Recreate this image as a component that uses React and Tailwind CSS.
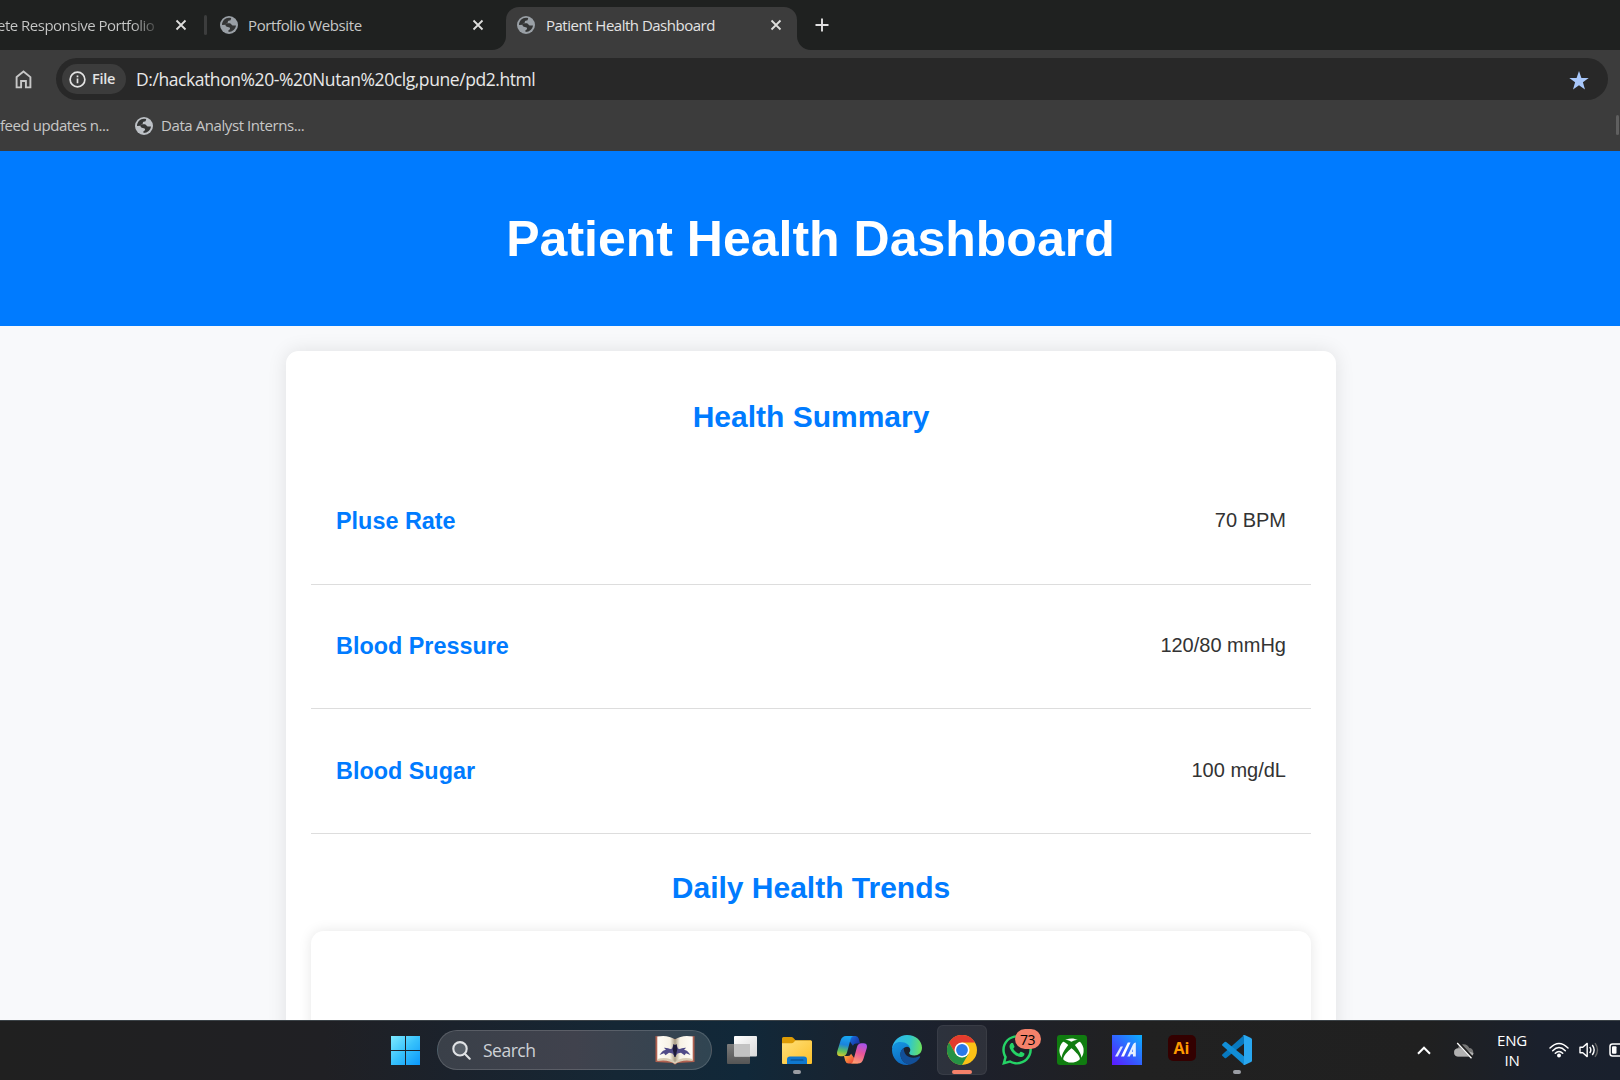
import React from "react";
import { FaWhatsapp, FaXbox } from "react-icons/fa";

function Globe({ className }) {
  return (
    <svg viewBox="0 0 18 18" className={className}>
      <circle cx="9" cy="9" r="9" fill="currentColor" />
      <g fill="#343535">
        <path d="M11.2 2.1L10.6 4.2L7.9 5L8 6.6L6 7.2L5.6 8.7L2 9C2 5 5.2 1.7 9.2 1.8Z" />
        <path d="M5.5 7.2H9.8C11.6 7.4 11.4 9.4 13 9.6H16C15.6 13.2 12.6 16 8.6 16.1L8.4 14.2C10 14 10.6 12.6 9.6 11.6C8.6 10.8 7.2 11.4 6 10.2C5.3 9.4 5.2 8.3 5.5 7.2Z" />
      </g>
    </svg>
  );
}

function Close() {
  return (
    <svg viewBox="0 0 12 12" className="size-3 shrink-0 text-[#dededc]">
      <path d="M1.5 1.5l9 9M10.5 1.5l-9 9" stroke="currentColor" strokeWidth="1.8" />
    </svg>
  );
}

function TabStrip() {
  return (
    <div className="flex h-[50px] w-full items-end bg-[#1f2120] text-[15px] text-[#c7c8c7]">
      <div className="flex h-[50px] w-[204px] items-center justify-between">
        <span className="-ml-[3px] w-[165px] bg-linear-to-r from-[#c7c8c7] from-82% to-transparent bg-clip-text tracking-[-0.5px] whitespace-nowrap text-transparent">
          ete Responsive Portfolio
        </span>
        <span className="mr-[17px]"><Close /></span>
      </div>
      <div className="flex h-[50px] w-[302px] items-center">
        <div className="h-5 w-[3px] rounded bg-[#3c3d3d]" />
        <Globe className="ml-[13px] size-[18px] text-[#9aa0a6]" />
        <span className="ml-[10px] flex-1 tracking-[-0.38px]">Portfolio Website</span>
        <span className="mr-[22px]"><Close /></span>
      </div>
      <div className="relative flex h-[43px] w-[291px] items-center rounded-t-[13px] bg-[#3c3c3c] pb-[7px] text-[#e3e3e3]">
        <svg viewBox="0 0 14 14" className="absolute bottom-0 -left-3.5 size-3.5"><path d="M14 0v14H0A14 14 0 0 0 14 0Z" fill="#3c3c3c" /></svg>
        <svg viewBox="0 0 14 14" className="absolute -right-3.5 bottom-0 size-3.5"><path d="M0 0v14H14A14 14 0 0 1 0 0Z" fill="#3c3c3c" /></svg>
        <Globe className="ml-[11px] size-[18px] text-[#9aa0a6]" />
        <span className="ml-[11px] flex-1 tracking-[-0.5px]">Patient Health Dashboard</span>
        <span className="mr-[15px]"><Close /></span>
      </div>
      <div className="flex h-[50px] items-center pl-[18px]">
        <svg viewBox="0 0 14 14" className="size-3.5"><path d="M7 .5v13M.5 7h13" stroke="#e0e0e0" strokeWidth="1.9" /></svg>
      </div>
    </div>
  );
}

function AddressBar() {
  return (
    <div className="flex h-[58px] items-center bg-[#3c3c3c] pr-3 pl-[15px]">
      <svg viewBox="0 0 17 19" className="h-[19px] w-[17px]" fill="none" stroke="#c7c7c7" strokeWidth="1.9">
        <path d="M1.6 7.1L8.5 1.5L15.4 7.1V17.4H10.9V11H6.1V17.4H1.6Z" />
      </svg>
      <div className="ml-6 flex h-[42px] flex-1 items-center rounded-full bg-[#282828] pl-1.5">
        <div className="flex h-[30px] w-16 items-center rounded-full bg-[#3c3c3c] pl-[7px]">
          <svg viewBox="0 0 18 18" className="size-[17px]" fill="none" stroke="#e3e3e3" strokeWidth="1.8">
            <circle cx="9" cy="9" r="7.8" />
            <path d="M9 8v5M9 4.8v1.9" />
          </svg>
          <span className="mb-px ml-[6px] text-[14.5px] font-semibold tracking-[-0.3px] text-[#e3e3e3]">File</span>
        </div>
        <span className="ml-[10px] flex-1 text-[17.5px] tracking-[-0.43px] text-[#e8e8e8]">D:/hackathon%20-%20Nutan%20clg,pune/pd2.html</span>
        <svg viewBox="0 0 20 19" className="mt-0.5 mr-[19px] h-[19px] w-5"><path d="M10 0L12.4 6.9H19.7L13.9 11.3L16 18.5L10 14.2L4 18.5L6.1 11.3L.3 6.9H7.6Z" fill="#a8c7fa" /></svg>
      </div>
    </div>
  );
}

function Bookmarks() {
  return (
    <div className="flex h-[43px] items-center bg-[#3c3c3c] pb-[9px] text-[15px] text-[#c7c7c7]">
      <span className="w-[135px] tracking-[-0.45px] whitespace-nowrap">feed updates n...</span>
      <Globe className="mt-px size-[18px] text-[#bdc1c6]" />
      <span className="ml-2 flex-1 tracking-[-0.42px]">Data Analyst Interns...</span>
      <div className="mr-px h-5 w-[3px] rounded bg-[#5f5f5f]" />
    </div>
  );
}

const metrics = [
  { name: "Pluse Rate", value: "70 BPM" },
  { name: "Blood Pressure", value: "120/80 mmHg" },
  { name: "Blood Sugar", value: "100 mg/dL" },
];

function Dashboard() {
  return (
    <div className="h-[869px] overflow-hidden bg-[#f8f9fb] font-['Liberation_Sans',Arial,sans-serif]">
      <header className="flex h-[175px] items-center justify-center bg-[#007bff] pl-px">
        <h1 className="text-[50px] leading-[58px] font-bold text-white">Patient Health Dashboard</h1>
      </header>
      <main className="mt-[25px] ml-[286px] h-[900px] w-[1050px] rounded-[12.5px] bg-white px-[25px] pt-[49px] shadow-[0_0_19px_rgba(0,0,0,0.1)]">
        <h2 className="text-center text-[30px] leading-[34px] font-bold text-[#007bff]">Health Summary</h2>
        <div className="mt-[26px]">
          {metrics.map((m) => (
            <div key={m.name} className="flex h-[124.7px] items-center justify-between border-b border-[#dddddd] px-[25px]">
              <h3 className="text-[23.4px] font-bold text-[#007bff]">{m.name}</h3>
              <span className="pb-[3px] text-[20px] text-[#333333]">{m.value}</span>
            </div>
          ))}
        </div>
        <h2 className="mt-[37px] text-center text-[30px] leading-[34px] font-bold text-[#007bff]">Daily Health Trends</h2>
        <div className="mt-[26px] h-[300px] rounded-[12.5px] bg-white shadow-[0_0_13px_rgba(0,0,0,0.1)]" />
      </main>
    </div>
  );
}

function Slot({ children, active, indicator }) {
  return (
    <div className="relative flex h-[60px] w-[55px] items-center justify-center">
      {active && <div className="absolute top-[5px] left-[2.5px] h-[50px] w-[50px] rounded-md border border-white/5 bg-white/8" />}
      <div className="relative">{children}</div>
      {active && <div className="absolute bottom-[6px] h-1 w-5 rounded-full bg-[#f4816a]" />}
      {indicator && <div className="absolute bottom-[6px] h-1 w-2 rounded-full bg-[#9a9da3]" />}
    </div>
  );
}

function WindowsLogo() {
  return (
    <svg viewBox="0 0 29 29" className="size-[29px]">
      <defs>
        <linearGradient id="win" x1="0" y1="0" x2="29" y2="29" gradientUnits="userSpaceOnUse">
          <stop offset="0" stopColor="#7eeaff" /><stop offset=".5" stopColor="#37c1fb" /><stop offset="1" stopColor="#0a97fb" />
        </linearGradient>
      </defs>
      <path d="M0 0h14v14H0zM15 0h14v14H15zM0 15h14v14H0zM15 15h14v14H15z" fill="url(#win)" />
    </svg>
  );
}

function BatBook() {
  return (
    <svg viewBox="0 0 40 30" className="h-[30px] w-10">
      <defs>
        <linearGradient id="page" x1="0" x2="1">
          <stop offset="0" stopColor="#fffdf7" /><stop offset=".36" stopColor="#f7f2e5" /><stop offset=".5" stopColor="#a89c83" /><stop offset=".64" stopColor="#f7f2e5" /><stop offset="1" stopColor="#fffdf7" />
        </linearGradient>
      </defs>
      <path d="M.5 1L20 4L39.5 1V27L22 28Q20 31 18 28L.5 27Z" fill="#b0604f" />
      <path d="M2.3 1.5Q13-.5 20 4.5Q27-.5 37.7 1.5V25Q27 23 20 28Q13 23 2.3 25Z" fill="url(#page)" />
      <path d="M2.3 24Q13 21 20 27Q27 21 37.7 24V26Q27 24 20 29Q13 24 2.3 26Z" fill="#d7ccb5" />
      <path d="M4.5 20C7 17 8 14.5 11 15L9 12.8C13 12.5 15 15 17.2 13.5L18.4 9.5L20 10.5L21.6 9.5L22.8 13.5C25 15 27 12.5 31 12.8L29 15C32 14.5 33 17 35.5 20L31 18.3L29.5 20.3L26 17.8L22.5 18.5L20 22L17.5 18.5L14 17.8L10.5 20.3L9 18.3Z" fill="#504b88" />
      <path d="M18.5 9L20 10L21.5 9L22.4 14L20.5 22H19.5L17.6 14Z" fill="#1d1b38" />
    </svg>
  );
}

function TaskView() {
  return (
    <svg viewBox="0 0 30 28" className="h-7 w-[30px]">
      <defs>
        <linearGradient id="tv" x1="0" y1="0" x2="1" y2="1"><stop stopColor="#ffffff" /><stop offset="1" stopColor="#d9d9d9" /></linearGradient>
        <linearGradient id="tvb" x1="0" y1="0" x2="0" y2="1"><stop stopColor="#7c7c7c" /><stop offset="1" stopColor="#555555" /></linearGradient>
      </defs>
      <rect x="0" y="8" width="23" height="20" rx="1" fill="url(#tvb)" />
      <rect x="7" y="0" width="23" height="20.5" rx="1" fill="url(#tv)" />
      <path d="M7 8H23V20.5H8Q7 20.5 7 19.5Z" fill="#c3c3c3" />
    </svg>
  );
}

function Folder() {
  return (
    <svg viewBox="0 0 30 27" className="h-[27px] w-[30px]">
      <defs><linearGradient id="fold" x1="0" y1="0" x2="1" y2="1"><stop stopColor="#ffe07a" /><stop offset="1" stopColor="#fcc02a" /></linearGradient></defs>
      <path d="M0 1.5Q0 0 1.5 0H9.5Q10.5 0 11.2.8L13.5 3.2H28.5Q30 3.2 30 5V9H0Z" fill="#dd9b05" />
      <path d="M0 6.2H9.5Q11 6.2 12 5L13.4 3.5H28.7Q30 3.5 30 5V26Q30 27 29 27H1Q0 27 0 26Z" fill="url(#fold)" />
      <path d="M5 27V22.5Q5 19.5 8 19.5H22Q25 19.5 25 22.5V27Z" fill="#0f78cf" />
      <path d="M9 23h12" stroke="#08457f" strokeWidth="1.2" strokeLinecap="round" />
    </svg>
  );
}

function Copilot() {
  return (
    <svg viewBox="0 0 30 28" className="h-7 w-[30px]">
      <defs>
        <linearGradient id="cpl" x1="8" y1="0" x2="4" y2="21" gradientUnits="userSpaceOnUse"><stop stopColor="#18a7f2" /><stop offset=".4" stopColor="#1a83dd" /><stop offset=".72" stopColor="#60c15c" /><stop offset="1" stopColor="#eccb25" /></linearGradient>
        <linearGradient id="cpr" x1="25" y1="7" x2="17" y2="28" gradientUnits="userSpaceOnUse"><stop stopColor="#a553ed" /><stop offset=".45" stopColor="#e95598" /><stop offset="1" stopColor="#ffa56b" /></linearGradient>
        <linearGradient id="cpt" x1="12" y1="0" x2="22" y2="8" gradientUnits="userSpaceOnUse"><stop stopColor="#1577e9" /><stop offset="1" stopColor="#1c2f9d" /></linearGradient>
        <linearGradient id="cpb" x1="7" y1="20" x2="15" y2="27" gradientUnits="userSpaceOnUse"><stop stopColor="#ffb13b" /><stop offset="1" stopColor="#ed4e3c" /></linearGradient>
      </defs>
      <path d="M9 0H18.5Q21 0 21.8 2.8L23 7.5H19Q16.8 7.5 15.9 9.8Z" fill="url(#cpt)" />
      <path d="M21 27.5H11.5Q9 27.5 8.2 24.8L7 20H11Q13.2 20 14.1 17.7Z" fill="url(#cpb)" />
      <path d="M9 0H16.5Q14.5 0 13.8 2.5L10 16.5Q9 20.2 5.5 20.2H3.5Q-.7 20.2.2 15.5L3.6 4.5Q5 0 9 0Z" fill="url(#cpl)" />
      <path d="M21 27.5H13.5Q15.5 27.5 16.2 25L20 11Q21 7.3 24.5 7.3H26.5Q30.7 7.3 29.8 12L26.4 23Q25 27.5 21 27.5Z" fill="url(#cpr)" />
    </svg>
  );
}

function Edge() {
  return (
    <svg viewBox="0 0 30 30" className="size-[30px]">
      <defs>
        <linearGradient id="ed1" x1="1" y1="8" x2="30" y2="12" gradientUnits="userSpaceOnUse"><stop stopColor="#2eb5ee" /><stop offset=".55" stopColor="#2fc6cf" /><stop offset="1" stopColor="#6de35b" /></linearGradient>
        <linearGradient id="ed2" x1="4" y1="10" x2="12" y2="30" gradientUnits="userSpaceOnUse"><stop stopColor="#1390dc" /><stop offset="1" stopColor="#0f66bd" /></linearGradient>
      </defs>
      <path d="M0 13.5C1 5.5 7.5 0 15 0C24 0 30 6 30 12.8C30 17.8 26.5 20.5 22.5 20.5C19 20.5 17.2 19.4 17.2 18.1C17.2 17.3 18.3 16.7 18.3 14.7C18.3 12.5 16 10.5 12 9.5C7 8.5 2.5 10 0 13.5Z" fill="url(#ed1)" />
      <path d="M0 15C.2 9.5 4 7 8.5 7C14 7 18.3 10.4 18.3 14.7C18.3 12.8 16.7 11.7 15 11.7C12.8 11.7 8.5 14.5 8.5 19.5C8.5 25 13 29.2 18.5 29.5C8.3 32 0 24.5 0 15Z" fill="url(#ed2)" />
      <path d="M11.8 13C9.2 14.5 8.2 17 8.5 20C9 26 14 30 18.5 29.5C23 28.3 26 25.8 28 22.5C28.5 21.5 27.5 21 26.7 21.5C19 25 11.5 21 11.8 13Z" fill="#124f98" />
    </svg>
  );
}

function Chrome() {
  return (
    <svg viewBox="0 0 30 30" className="size-[30px]">
      <circle cx="15" cy="15" r="15" fill="#fbc116" />
      <path d="M2 7.5A15 15 0 0 1 28 7.5H15L8.5 18.8Z" fill="#e33b2e" />
      <path d="M2 7.5L8.5 18.75L15 22.5L21.5 18.75L15 30A15 15 0 0 1 2 7.5Z" fill="#269245" />
      <circle cx="15" cy="15" r="7.5" fill="#ffffff" />
      <circle cx="15" cy="15" r="5.9" fill="#2a79e8" />
    </svg>
  );
}

function AppM() {
  return (
    <svg viewBox="0 0 30 30" className="size-[30px]">
      <defs><linearGradient id="mm" x1="0" y1="1" x2="1" y2="0"><stop stopColor="#5d16ff" /><stop offset=".4" stopColor="#3953ff" /><stop offset="1" stopColor="#0bb1ff" /></linearGradient></defs>
      <path d="M0 0H30V30H0Z" fill="url(#mm)" />
      <path d="M3 21.5L8.6 11.5H11L5.8 21.5Z" fill="#dfe8ff" />
      <path d="M9 21.5L15.8 7.5H18.5L12 21.5Z" fill="#ffffff" />
      <path d="M15.3 21.5L21 9.5Q22 7.5 23.8 7.5V21.5H21V19.2H18.8L17.8 21.5ZM19.9 16.8H21V14Z" fill="#e6f0ff" />
    </svg>
  );
}

function VSCode() {
  return (
    <svg viewBox="0 0 30 30" className="size-[30px]">
      <path d="M22.5 1L24 7L4.2 23Q3.4 23.5 2.7 22.9L.5 21Q-.3 20.1.5 19.3L20.8 1.2Z" fill="#0879bf" />
      <path d="M22.5 29L24 23L4.2 7Q3.4 6.5 2.7 7.1L.5 9Q-.3 9.9.5 10.7L20.8 28.8Z" fill="#118ed7" />
      <path d="M20.5 28.8Q21.7 30.4 23.2 29.7L29 27Q30 26.5 30 25.4V4.6Q30 3.5 29 3L23.2.3Q21.7-.4 20.5 1.2Q22 .8 22 2.5V27.5Q22 29.2 20.5 28.8Z" fill="#29a7f0" />
    </svg>
  );
}

function Tray() {
  return (
    <div className="flex h-[60px] flex-1 items-center justify-end text-white">
      <svg viewBox="0 0 14 9" className="mr-[23px] h-[9px] w-3.5"><path d="M1 7.7L7 1.7L13 7.7" fill="none" stroke="#fff" strokeWidth="2" /></svg>
      <svg viewBox="0 0 20 18" className="h-[18px] w-5">
        <path d="M4.2 15.5A4 4 0 0 1 3.8 7.2A6.2 6.2 0 0 1 15.3 7A4.3 4.3 0 0 1 15.8 15.5Z" fill="#777777" />
        <path d="M4.5 15.5A4 4 0 0 1 4 7.5Q6.5 6.5 9 8.5L19.5 12A3.8 3.8 0 0 1 15.8 15.5Z" fill="#b1b1b1" />
        <path d="M3.5 1L18 16.5" stroke="#202020" strokeWidth="3.2" /><path d="M3.2 2L17.5 17.3" stroke="#fff" strokeWidth="1.3" />
      </svg>
      <div className="mx-[20px] w-[36px] text-center text-[15px] leading-5 tracking-[-0.2px]">ENG<br />IN</div>
      <svg viewBox="0 0 20 16" className="ml-[-1px] h-4 w-5" fill="none" stroke="#fff" strokeWidth="1.5" strokeLinecap="round">
        <path d="M1 6Q10-3 19 6M3.7 8.8Q10 2.3 16.3 8.8M6.3 11.3Q10 7.6 13.7 11.3" /><circle cx="10" cy="13.5" r="1.2" fill="#fff" />
      </svg>
      <svg viewBox="0 0 20 16" className="ml-[10px] h-4 w-5" fill="none" stroke="#fff" strokeWidth="1.4" strokeLinejoin="round">
        <path d="M1 5.2H3.8L8.2 1.4V14.6L3.8 10.8H1ZM10.7 5Q13 8 10.7 11M13.3 3Q17 8 13.3 13" /><path d="M16 1.2Q21 8 16 14.8" stroke="#666" />
      </svg>
      <svg viewBox="0 0 11 14" className="ml-[10px] h-3.5 w-[11px]"><path d="M12 1H3.5Q1 1 1 3.5V10.5Q1 13 3.5 13H12" fill="none" stroke="#fff" strokeWidth="1.5" /><rect x="3" y="3.2" width="4.5" height="7.6" rx="1" fill="#fff" /></svg>
    </div>
  );
}

function Taskbar() {
  return (
    <div className="flex h-[60px] items-center bg-[linear-gradient(90deg,#202020_0%,#202024_20%,#1b222c_28%,#152735_38%,#112839_46%,#182431_52%,#1d202b_60%,#212121_70%,#202020_88%,#1a202c_95%,#19202d_100%)] shadow-[inset_0_1px_0_#3b4247]">
      <div className="ml-[391px]"><WindowsLogo /></div>
      <div className="ml-[17px] flex h-10 w-[275px] items-center rounded-full border border-white/15 bg-linear-to-r from-[#3a4049] via-[#40424d] to-[#304552] pl-3.5">
        <svg viewBox="0 0 19 19" className="size-[19px]" fill="none" stroke="#e0e2e5" strokeWidth="2.1" strokeLinecap="round"><circle cx="8" cy="7.8" r="6.7" fill="#596069" /><path d="M12.8 12.8L17.7 17.7" /></svg>
        <span className="ml-[12px] flex-1 text-[17.5px] tracking-[-0.5px] text-[#cdd1d6]">Search</span>
        <div className="mr-4"><BatBook /></div>
      </div>
      <div className="ml-[2px] flex">
        <Slot><TaskView /></Slot>
        <Slot indicator><Folder /></Slot>
        <Slot><Copilot /></Slot>
        <Slot><Edge /></Slot>
        <Slot active><Chrome /></Slot>
        <Slot>
          <FaWhatsapp className="size-[34px] text-[#25d366]" />
          <div className="absolute -top-[4px] left-[15px] flex h-5 w-[26px] items-center justify-center rounded-full bg-[#f4816a] text-[14px] tracking-[-0.4px] text-black">73</div>
        </Slot>
        <Slot><div className="flex size-[30px] items-center justify-center rounded-[3px] bg-[#107c10]"><FaXbox className="size-[25px] text-white" /></div></Slot>
        <Slot><AppM /></Slot>
        <Slot><div className="mb-1 flex h-[26px] w-7 items-center justify-center rounded-[5px] bg-[#330000] text-[16px] leading-none font-bold text-[#ff9a00]">Ai</div></Slot>
        <Slot indicator><VSCode /></Slot>
      </div>
      <Tray />
    </div>
  );
}

export default function App() {
  return (
    <div className="flex h-[1080px] w-[1620px] flex-col overflow-hidden bg-[#3c3c3c] font-['Open_Sans','Noto_Sans',sans-serif]">
      <TabStrip />
      <div className="h-[101px] shrink-0">
        <AddressBar />
        <Bookmarks />
      </div>
      <Dashboard />
      <Taskbar />
    </div>
  );
}
